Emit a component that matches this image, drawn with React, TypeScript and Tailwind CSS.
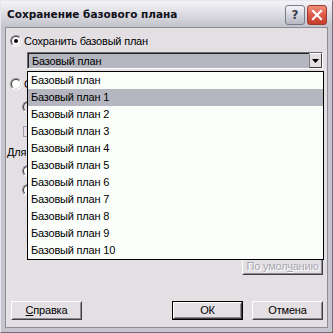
import React from "react";

function Radio({ checked = false, disabled = false }: { checked?: boolean; disabled?: boolean }) {
  return (
    <div
      className={`w-[12px] h-[12px] rounded-full border border-t-[#8a8890] border-l-[#8a8890] border-r-[#ffffff] border-b-[#ffffff] flex items-center justify-center shrink-0 ${
        disabled ? "bg-[#e3dfe3]" : "bg-[#ffffff]"
      }`}
    >
      <div className="w-[10px] h-[10px] rounded-full border border-t-[#404040] border-l-[#404040] border-r-[#d4d0d8] border-b-[#d4d0d8] flex items-center justify-center">
        {checked && <div className="w-[4px] h-[4px] rounded-full bg-black" />}
      </div>
    </div>
  );
}

function Btn({
  children,
  isDefault = false,
  className = "",
}: {
  children: React.ReactNode;
  isDefault?: boolean;
  className?: string;
}) {
  return (
    <div className={`${isDefault ? "border border-black" : ""} ${className}`}>
      <div className="w-full h-full border border-t-white border-l-white border-r-[#404040] border-b-[#404040] bg-[#e3dfe3]">
        <div className="w-full h-full border border-t-[#e3dfe3] border-l-[#e3dfe3] border-r-[#8c8a94] border-b-[#8c8a94] flex items-center justify-center">
          {children}
        </div>
      </div>
    </div>
  );
}

const items = [
  "Базовый план",
  "Базовый план 1",
  "Базовый план 2",
  "Базовый план 3",
  "Базовый план 4",
  "Базовый план 5",
  "Базовый план 6",
  "Базовый план 7",
  "Базовый план 8",
  "Базовый план 9",
  "Базовый план 10",
];

export default function App() {
  return (
    <div className="w-[333px] h-[333px] bg-[#c6c4cd] border border-t-[#e8e6ee] border-l-[#e8e6ee] border-r-[#6e6c78] border-b-[#6e6c78] flex flex-col font-['Liberation_Sans',Arial,sans-serif] text-[11px] tracking-[-0.2px] text-black overflow-hidden">
      {/* title bar */}
      <div className="h-[26px] shrink-0 flex items-center pl-[6px] pr-[5px] bg-gradient-to-b from-[#f4f4f8] via-[#dcdce2] to-[#c2c2ca]">
        <div className="flex-1 font-['DejaVu_Sans',sans-serif] font-bold text-[10.5px] tracking-[0px] text-[#101018] pt-[1px]">
          Сохранение базового плана
        </div>
        <div className="flex gap-[2px] mt-[1px]">
          <div className="w-[20px] h-[20px] rounded-[3px] border border-[#7c7c88] bg-gradient-to-b from-[#f4f4f8] to-[#b8b8c4] flex items-center justify-center font-['DejaVu_Sans',sans-serif] font-bold text-[12px] text-[#3a3a48]">
            ?
          </div>
          <div className="w-[20px] h-[20px] rounded-[3px] border border-[#9a3a30] bg-gradient-to-b from-[#f0907c] via-[#dc5844] to-[#c83c2c] flex items-center justify-center">
            <svg width="12" height="12" viewBox="0 0 12 12">
              <path d="M2 2 L10 10 M10 2 L2 10" stroke="#ffffff" strokeWidth="2.2" strokeLinecap="square" />
            </svg>
          </div>
        </div>
      </div>

      {/* client */}
      <div className="flex-1 ml-[4px] mr-[4px] mb-[4px] border border-[#8e8c97] bg-[#e3dfe3] relative flex flex-col">
        {/* row 1 */}
        <div className="mt-[7px] ml-[4px] h-[12px] flex items-center gap-[2px]">
          <Radio checked />
          <span className="leading-none">Сохранить базовый план</span>
        </div>

        {/* combo */}
        <div className="mt-[5px] ml-[21px] w-[296px] h-[17px] border border-t-[#6c6a74] border-l-[#6c6a74] border-r-white border-b-white flex">
          <div className="flex-1 bg-[#b5b7c0] flex items-center pl-[3px] border-t border-l border-t-[#202020] border-l-[#202020]">
            Базовый план
          </div>
          <div className="w-[13px] bg-[#e3dfe3] border border-t-white border-l-[#808080] border-r-[#404040] border-b-[#404040] flex items-center justify-center">
            <svg width="7" height="4" viewBox="0 0 7 4">
              <path d="M0 0 H7 L3.5 4 Z" fill="#000" />
            </svg>
          </div>
        </div>

        {/* row 2 (mostly hidden behind list) */}
        <div className="mt-[9px] ml-[4px] h-[12px] flex items-center gap-[2px]">
          <Radio />
          <span className="w-[5px] overflow-hidden">С</span>
        </div>
        <div className="mt-[11px] ml-[16px] h-[12px] flex items-center">
          <Radio disabled />
        </div>
        <div className="mt-[12px] ml-[17px] h-[12px] flex items-center">
          <div className="w-[11px] h-[11px] border border-[#a09ea8] bg-[#e3dfe3]" />
        </div>
        <div className="mt-[9px] ml-[1px] h-[12px] flex items-center">
          <span>Для</span>
        </div>
        <div className="mt-[7px] ml-[16px] h-[12px] flex items-center">
          <Radio />
        </div>
        <div className="mt-[7px] ml-[16px] h-[12px] flex items-center">
          <Radio />
        </div>

        {/* default button */}
        <div className="mt-[62px] self-end mr-[4px]">
          <Btn className="w-[81px] h-[17px]">
            <span className="text-[#a9a7b1] [text-shadow:1px_1px_0_#ffffff] leading-none">
              По умол<span className="underline">ч</span>анию
            </span>
          </Btn>
        </div>

        {/* bottom buttons */}
        <div className="mt-[26px] flex items-center pl-[5px] pr-[4px]">
          <Btn className="w-[71px] h-[19px]">
            <span>
              <span className="underline">С</span>правка
            </span>
          </Btn>
          <div className="flex-1" />
          <Btn isDefault className="w-[71px] h-[19px]">
            <span>ОК</span>
          </Btn>
          <div className="w-[9px]" />
          <Btn className="w-[71px] h-[19px]">
            <span>Отмена</span>
          </Btn>
        </div>

        {/* dropdown list */}
        <div className="absolute left-[21px] top-[43px] w-[297px] border border-black bg-[#fbfefb]">
          {items.map((t, i) => (
            <div
              key={t}
              className={`h-[17px] flex items-center pl-[3px] ${i === 1 ? "bg-[#b5b6bf]" : ""}`}
            >
              {t}
            </div>
          ))}
        </div>
      </div>
    </div>
  );
}
